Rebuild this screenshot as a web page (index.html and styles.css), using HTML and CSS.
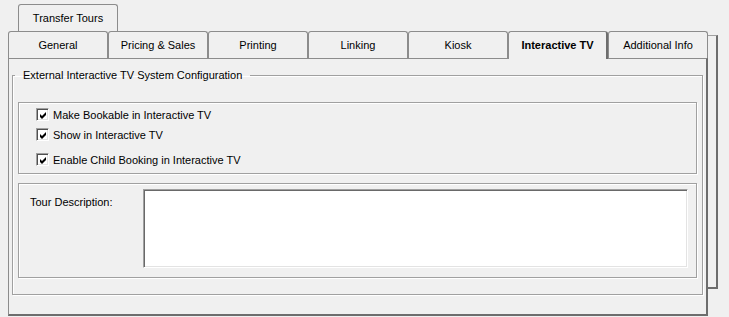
FILE: index.html
```html
<!DOCTYPE html>
<html lang="en">
<head>
  <meta charset="UTF-8">
  <meta name="viewport" content="width=device-width, initial-scale=1.0">
  <title>Transfer Tours</title>
  <link rel="stylesheet" href="styles.css">
</head>
<body>
  <div class="window">
    <div class="outer-tabs">
      <div class="otab">Transfer Tours</div>
    </div>

    <div class="outer-body">
      <div class="tabctl">
        <div class="tabs">
          <div class="tab">General</div>
          <div class="tab">Pricing &amp; Sales</div>
          <div class="tab">Printing</div>
          <div class="tab">Linking</div>
          <div class="tab">Kiosk</div>
          <div class="tab selected">Interactive TV</div>
          <div class="tab">Additional Info</div>
        </div>

        <div class="page">
          <fieldset class="group">
            <legend>External Interactive TV System Configuration</legend>

            <div class="box checks">
              <label class="chk">
                <span class="cb"><svg width="9" height="9" viewBox="0 0 9 9"><path d="M1 3 L3 5 L7 1 L7 4 L3 8 L1 6 Z" fill="#000"/></svg></span>
                Make Bookable in Interactive TV
              </label>
              <label class="chk">
                <span class="cb"><svg width="9" height="9" viewBox="0 0 9 9"><path d="M1 3 L3 5 L7 1 L7 4 L3 8 L1 6 Z" fill="#000"/></svg></span>
                Show in Interactive TV
              </label>
              <label class="chk last">
                <span class="cb"><svg width="9" height="9" viewBox="0 0 9 9"><path d="M1 3 L3 5 L7 1 L7 4 L3 8 L1 6 Z" fill="#000"/></svg></span>
                Enable Child Booking in Interactive TV
              </label>
            </div>

            <div class="box desc">
              <span class="desc-label">Tour Description:</span>
              <div class="textarea"></div>
            </div>
          </fieldset>
        </div>
      </div>
      <div class="strip"></div>
    </div>
  </div>
</body>
</html>
```

FILE: styles.css
```css
body {
  margin: 0;
  background: #f0f0f0;
  font-family: "Liberation Sans", Arial, sans-serif;
  font-size: 11px;
  color: #000;
}
.window {
  width: 729px;
  height: 317px;
  overflow: hidden;
}
.outer-tabs {
  padding: 4px 0 0 18px;
  display: flex;
}
.otab {
  width: 100px;
  height: 27px;
  box-sizing: border-box;
  border: 1px solid #8c8c8c;
  border-bottom: none;
  border-radius: 3px 3px 0 0;
  text-align: center;
  line-height: 26px;
}
.outer-body {
  display: flex;
  padding-left: 8px;
}
.tabctl {
  width: 700px;
}
.tabs {
  display: flex;
  height: 27px;
}
.tab {
  width: 100px;
  box-sizing: border-box;
  border: 1px solid #8c8c8c;
  border-bottom: none;
  border-radius: 3px 3px 0 0;
  text-align: center;
  line-height: 26px;
}
.tab.selected {
  font-weight: bold;
  position: relative;
  height: 28px;
  background: #f0f0f0;
  border-right: 2px solid #6d6d6d;
  z-index: 1;
}
.page {
  height: 258px;
  box-sizing: border-box;
  border-top: 1px solid #8c8c8c;
  border-left: 1px solid #8c8c8c;
  border-right: 2px solid #6d6d6d;
  border-bottom: 2px solid #6d6d6d;
  padding: 9px 3px 0 3px;
}
.group {
  margin: 0;
  padding: 20px 5px 16px 5px;
  border: 1px solid #a0a0a0;
  box-shadow: inset 1px 1px 0 #fff, 1px 1px 0 #fff;
}
.group legend {
  padding: 0 8px;
  margin-left: -3px;
  line-height: 14px;
}
.box {
  border: 1px solid #a0a0a0;
  box-shadow: inset 1px 1px 0 #fff, 1px 1px 0 #fff;
}
.checks {
  height: 72px;
  box-sizing: border-box;
  padding: 4px 0 0 17px;
  display: flex;
  flex-direction: column;
  gap: 5px;
}
.chk {
  display: flex;
  align-items: center;
  gap: 4px;
  height: 15px;
}
.chk.last {
  margin-top: 5px;
}
.cb {
  width: 13px;
  height: 13px;
  box-sizing: border-box;
  background: #fff;
  border: 1px solid;
  border-color: #a0a0a0 #fff #fff #a0a0a0;
  box-shadow: inset 1px 1px 0 #505050, inset -1px -1px 0 #e3e3e3;
  display: flex;
  align-items: center;
  justify-content: center;
}
.cb svg {
  display: block;
  margin: 1px 0 0 1px;
}
.desc {
  margin-top: 9px;
  height: 95px;
  box-sizing: border-box;
  padding: 5px 8px 0 11px;
  display: flex;
}
.desc-label {
  width: 113px;
  margin-top: 7px;
  line-height: 13px;
}
.textarea {
  flex: 1;
  height: 79px;
  box-sizing: border-box;
  background: #fff;
  border: 1px solid;
  border-color: #a0a0a0 #fff #fff #a0a0a0;
  box-shadow: inset 1px 1px 0 #696969, inset -1px -1px 0 #e3e3e3;
}
.strip {
  width: 10px;
  height: 254px;
  margin-top: 4px;
  box-sizing: border-box;
  border-top: 1px solid #a0a0a0;
  border-right: 2px solid #6d6d6d;
  border-bottom: 2px solid #6d6d6d;
}
```
